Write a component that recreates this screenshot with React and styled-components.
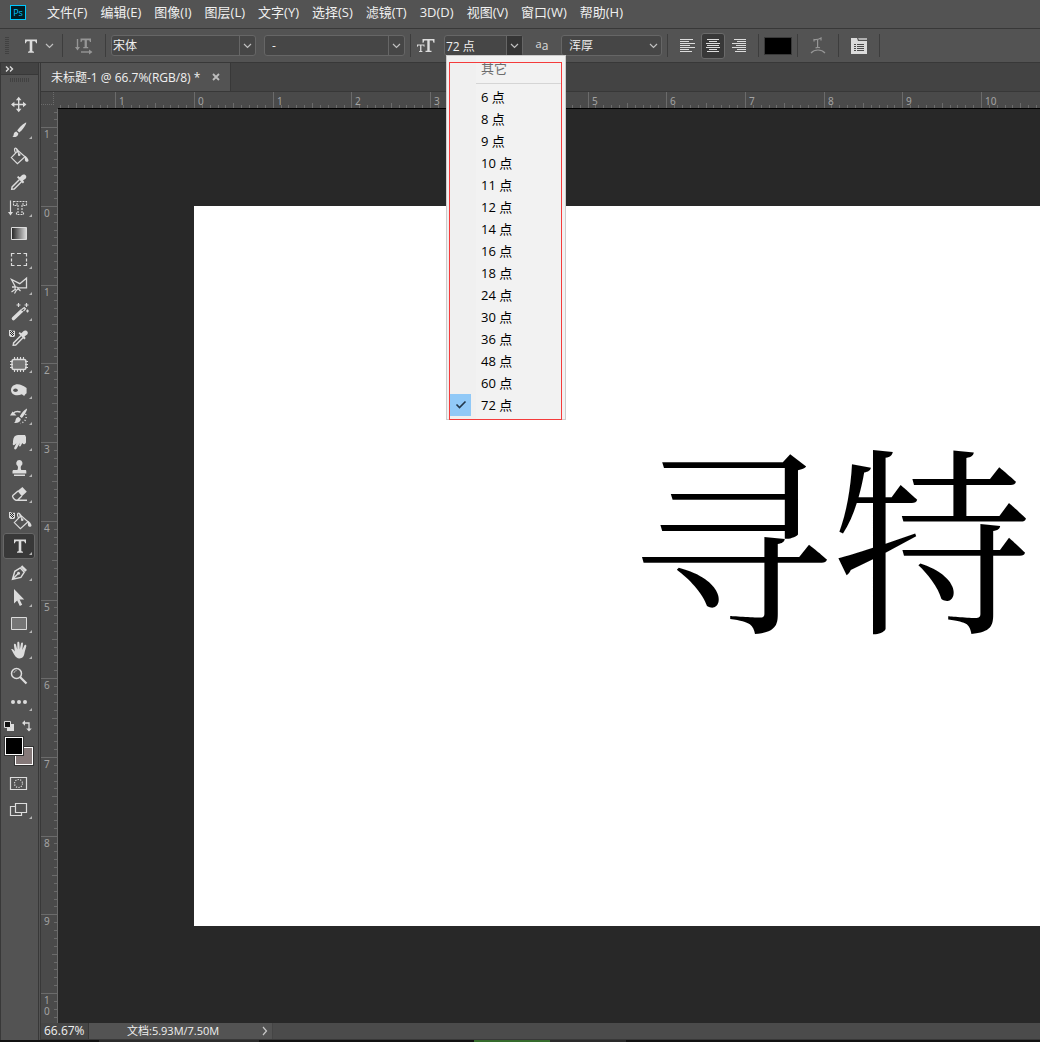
import { useState } from "react";
import styled, { createGlobalStyle } from "styled-components";

const panel = "#535353";
const panelDark = "#434343";
const rulerGray = "#4a4a4a";
const fieldBackground = "#464646";
const line = "#383838";
const iconGray = "#dcdcdc";
const dimGray = "#969696";
const lightText = "#f0f0f0";
const canvasGray = "#282828";

const GlobalStyle = createGlobalStyle`
  * {
    box-sizing: border-box;
  }

  body {
    margin: 0;
    background-color: ${panel};
    color: ${lightText};
    font-family: "Open Sans", "Noto Sans CJK SC", sans-serif;
    font-size: 13px;
  }

  button, input, select {
    font: inherit;
    color: inherit;
    margin: 0;
    padding: 0;
    border: none;
    background: none;
    outline: none;
  }
`;

const Window = styled.div`
  display: flex;
  flex-direction: column;
  height: 100vh;
  overflow: hidden;
`;

/* ---------- menu bar ---------- */

const MenuBar = styled.nav`
  display: flex;
  align-items: center;
  flex: none;
  gap: 13px;
  height: 29px;
  padding: 0 10px 4px;
  border-bottom: 1px solid ${line};
`;

const Logo = styled.div`
  width: 16px;
  height: 15px;
  margin-right: 8px;
  border: 1px solid #00c8ff;
  background-color: #001d26;
  color: #00c8ff;
  font-size: 9px;
  line-height: 13px;
  text-align: center;
`;

const MenuButton = styled.button`
  line-height: 20px;
  white-space: nowrap;
`;

/* ---------- options bar ---------- */

const OptionsBar = styled.div`
  display: flex;
  align-items: center;
  flex: none;
  height: 34px;
  padding-left: 5px;
  border-bottom: 1px solid ${line};
`;

const Grip = styled.div`
  width: ${(props) => (props.$across ? "20px" : "4px")};
  height: ${(props) => (props.$across ? "4px" : "18px")};
  background: repeating-linear-gradient(
    ${(props) => (props.$across ? "90deg" : "180deg")},
    #414141 0 1px,
    transparent 1px 2px
  );
`;

const Separator = styled.div`
  width: 1px;
  height: 23px;
  margin: 0 5px;
  background-color: #3d3d3d;
`;

const OptionButton = styled.button`
  display: flex;
  align-items: center;
  justify-content: center;
  width: ${(props) => props.$width || 30}px;
  height: 26px;
`;

const PresetButton = styled(OptionButton)`
  padding-left: 4px;
`;

const OptionLabel = styled.label`
  display: flex;
  align-items: center;
  justify-content: ${(props) => (props.$start ? "flex-start" : "center")};
  width: ${(props) => props.$width}px;
`;

const SmallA = styled.span`
  padding-bottom: ${(props) => (props.$raised ? "4px" : "0")};
  color: ${iconGray};
  font-size: ${(props) => (props.$raised ? "11px" : "12px")};
  line-height: 14px;
`;

const Field = styled.div`
  position: relative;
  display: flex;
  width: ${(props) => props.$width}px;
  height: 21px;
  margin-right: ${(props) => props.$after || 0}px;
  border: 1px solid #666;
  border-radius: 3px;
  background-color: ${fieldBackground};
`;

const Select = styled.select`
  flex: 1;
  min-width: 0;
  padding-left: ${(props) => props.$indent || 1}px;
  appearance: none;
  font-size: 12px;
`;

const SizeInput = styled.input`
  flex: 1;
  min-width: 0;
  padding-left: 1px;
  font-size: 12px;
`;

const Arrow = styled.span`
  display: flex;
  align-items: center;
  justify-content: center;
  width: 16px;
  border-left: ${(props) => (props.$plain ? "none" : "1px solid #666")};
  pointer-events: none;
`;

const ArrowButton = styled.button`
  display: flex;
  align-items: center;
  justify-content: center;
  width: 16px;
  border-left: 1px solid #666;
  background-color: #353535;
`;

const AlignGroup = styled.div`
  display: flex;
  gap: 2px;
  padding: 0 2px;
`;

const AlignButton = styled.button`
  display: flex;
  align-items: center;
  justify-content: center;
  width: 24px;
  height: 26px;
  border: 1px solid ${(props) => (props.$active ? "#6a6a6a" : "transparent")};
  border-radius: 3px;
  background-color: ${(props) => (props.$active ? "#383838" : "transparent")};
`;

const ColorButton = styled.button`
  width: 28px;
  height: 18px;
  border: 1px solid #393939;
  background-color: #000;
`;

/* ---------- size menu ---------- */

const SizeMenu = styled.div`
  position: absolute;
  z-index: 5;
  top: 19px;
  left: 1px;
  width: 120px;
  padding: 1px 3px 3px;
  border: 1px solid #ccc;
  background: linear-gradient(90deg, #f0f0f0 29px, #f2f2f2 29px);
  color: #000;

  &::after {
    content: "";
    position: absolute;
    inset: 6px 3px -1px 2px;
    border: 1px solid #f43b3b;
    pointer-events: none;
  }
`;

const SizeOption = styled.button`
  display: flex;
  align-items: center;
  gap: 10px;
  width: 100%;
  height: 22px;
  color: ${(props) => (props.disabled ? "#6d6d6d" : "#000")};
  line-height: 20px;
  text-align: left;
`;

const CheckBox = styled.span`
  display: flex;
  align-items: center;
  justify-content: center;
  width: 21px;
  height: 22px;
  background-color: ${(props) => (props.$checked ? "#91c9f7" : "transparent")};
`;

const MenuRule = styled.hr`
  height: 1px;
  margin: 4px 0 2px 26px;
  border: none;
  background-color: #d5d5d5;
`;

/* ---------- toolbar ---------- */

const Main = styled.div`
  display: flex;
  flex: 1;
  min-height: 0;
`;

const Toolbar = styled.aside`
  display: flex;
  flex-direction: column;
  flex: none;
  width: 39px;
  margin-right: 1px;
  border: solid ${line};
  border-width: 0 1px;
`;

const ToolbarHeader = styled.button`
  display: flex;
  align-items: center;
  height: 12px;
  padding-left: 4px;
  border-bottom: 1px solid ${line};
  background-color: ${panelDark};
`;

const ToolbarGrip = styled.div`
  padding: 3px 9px 9px;
`;

const ToolButton = styled.button`
  display: flex;
  align-items: center;
  justify-content: center;
  width: 32px;
  height: 26px;
  margin-left: 2px;
  border-radius: 3px;
  background-color: ${(props) => (props.$active ? "#383838" : "transparent")};
  box-shadow: ${(props) => (props.$active ? "inset 0 0 0 1px #676767" : "none")};
`;

const MiniButtons = styled.div`
  display: flex;
  gap: 6px;
  padding: 5px 3px 4px;
`;

const MiniButton = styled.button`
  display: flex;
`;

const Swatches = styled.div`
  display: grid;
  grid-template-columns: 10px 10px 10px;
  grid-template-rows: 10px 10px 10px;
  margin: 0 3px 5px;
`;

const Swatch = styled.button`
  grid-area: ${(props) => props.$area};
  z-index: ${(props) => (props.$front ? 1 : 0)};
  border: 1px solid #333;
  box-shadow: inset 0 0 0 1px #fff;
  background-color: ${(props) => props.$color};
`;

/* ---------- document ---------- */

const Document = styled.section`
  display: flex;
  flex-direction: column;
  flex: 1;
  min-width: 0;
  border-left: 1px solid ${line};
`;

const Tabs = styled.div`
  display: flex;
  flex: none;
  height: 29px;
  border-bottom: 1px solid ${line};
  background-color: ${panelDark};
`;

const Tab = styled.div`
  display: flex;
  align-items: center;
  gap: 12px;
  padding: 0 10px;
  border-right: 1px solid ${line};
  background-color: ${panel};
  font-size: 12px;
  white-space: nowrap;
`;

const CloseButton = styled.button`
  display: flex;
`;

const Workspace = styled.div`
  display: grid;
  grid-template-columns: 17px minmax(0, 1fr);
  grid-template-rows: 17px minmax(0, 1fr);
  flex: 1;
  min-height: 0;
  background-color: ${rulerGray};
`;

const RulerCorner = styled.div`
  position: relative;

  &::before {
    content: "";
    position: absolute;
    inset: 0 4px 4px 0;
    border: dotted #6b6b6b;
    border-width: 0 1px 1px 0;
  }
`;

const TopRuler = styled.svg`
  width: 100%;
  height: 17px;
  border-bottom: 1px solid #000;
`;

const SideRuler = styled.svg`
  width: 17px;
  height: 100%;
  border-right: 1px solid #6b6b6b;
`;

const RulerText = styled.text`
  fill: #a3a3a3;
  font-family: "Noto Sans", sans-serif;
  font-size: 10px;
`;

const Canvas = styled.div`
  padding: 97px 0 97px 136px;
  overflow: hidden;
  background-color: ${canvasGray};
`;

const Page = styled.div`
  height: 100%;
  padding: 226px 0 0 438px;
  overflow: hidden;
  background-color: #fff;
`;

const PageText = styled.div`
  color: #000;
  font-family: SimSun, "Noto Serif CJK SC", "Noto Sans CJK SC", serif;
  font-size: 200px;
  line-height: 200px;
  white-space: nowrap;
`;

const StatusBar = styled.footer`
  display: flex;
  flex: none;
  height: 17px;
  border-bottom: 1px solid ${line};
  background-color: #4b4b4b;
  font-size: 11px;
  line-height: 16px;
`;

const ZoomInput = styled.input`
  width: 48px;
  padding-left: 3px;
  border-right: 1px solid ${line};
  background-color: #464646;
  font-size: 12px;
`;

const DocumentInfo = styled.button`
  display: flex;
  align-items: center;
  justify-content: space-between;
  width: 184px;
  padding: 0 4px 0 38px;
  border-right: 1px solid #454545;
  background-color: ${panel};
`;

const TaskStrip = styled.div`
  display: grid;
  grid-template-columns: 99px 160px 215px 76px 76px 1fr;
  flex: none;
  height: 2px;
  background-color: #111;
`;

const TaskItem = styled.div`
  grid-column: ${(props) => props.$column};
  background-color: ${(props) => props.$color};
`;

/* ---------- icons ---------- */

const Icon = styled.svg`
  display: block;
  flex: none;
  fill: none;
  stroke: ${(props) => props.$color || iconGray};
  stroke-width: ${(props) => props.$weight || 1.4};
`;

function Chevron() {
  return (
    <Icon width="9" height="6" viewBox="0 0 9 6" $color="#c0c0c0" $weight={1.2}>
      <path d="M1 1l3.5 3.5L8 1" />
    </Icon>
  );
}

const solid = { fill: iconGray, stroke: "none" };

const checker = (
  <g {...solid}>
    <path d="M3 5h1.5l1 .8H9V11l-1.2 1H4.5L3 10.5z" />
    <path
      fill="#2c2c2c"
      d="M4 6h1v1H4zM6 6h1v1H6zM5 7h1v1H5zM7 7h1v1H7zM4 8h1v1H4zM6 8h1v1H6zM5 9h1v1H5zM7 9h1v1H7zM6 10h1v1H6z"
    />
  </g>
);

const dropper = (
  <>
    <path d="M13.5 10.5l-7.4 7.4-.4 2.4 2.5-.3 7.5-7.5" />
    <path
      {...solid}
      d="M11 8.3l1.3-1.2 1.3 1.1c1.5-.8 2.4-2.8 4.1-2.8 2.5 0 3.5 2.7 1.7 4.3L17 11.6l1.2 1.4-1.3 1.4z"
    />
  </>
);

const bucket = (
  <>
    <path
      strokeWidth="1.2"
      d="M5.3 14.6L12 7.5l7 6.3-7.6 6.8zM12 7.5C9.8 3.5 7.3 5 9.3 9.5M10.3 6.3l2.8 5"
    />
    <circle {...solid} cx="13.2" cy="11.7" r="1.3" />
    <path {...solid} d="M18.5 12.5c2 1 4 3.4 4 5s-3 1.8-3.5 0z" />
  </>
);

const letterT = (
  <path
    {...solid}
    d="M8 6.5h12v3.7h-1c-.2-1.4-.7-2-1.8-2h-1.9v9.3c0 .8.5 1.1 1.7 1.2v1h-6v-1c1.2-.1 1.7-.4 1.7-1.2V8.2h-1.9c-1.1 0-1.6.6-1.8 2H8z"
  />
);

const tools = [
  {
    name: "移动工具",
    plain: true,
    art: (
      <>
        <path d="M6 13.5h13.4M12.7 7v13" />
        <path
          {...solid}
          d="M12.7 5.8l2.8 3.4H9.9zM12.7 21.2l2.8-3.4H9.9zM5 13.5l3.4-2.8v5.6zM20.4 13.5L17 10.7v5.6z"
        />
      </>
    ),
  },
  {
    name: "画笔工具",
    art: (
      <path
        {...solid}
        d="M20.2 5.5c.6.5-1.8 5-4.6 8L13.2 15.6 11.2 13.6c1.5-2.8 7.4-8 9-8.1zM10.4 14.4l2 2c-.1 2.7-2.6 4-6 3.6 1.4-1 1.1-2 1.5-3.4.4-1.3 1.4-2.1 2.5-2.2z"
      />
    ),
  },
  { name: "油漆桶工具", plain: true, art: bucket },
  { name: "吸管工具", plain: true, art: dropper },
  {
    name: "直排文字蒙版工具",
    art: (
      <>
        <path strokeWidth="1.2" d="M4.5 5.5v12" />
        <path {...solid} d="M2 17h5l-2.5 3.5z" />
        <path
          strokeDasharray="2 1"
          strokeWidth="1.1"
          d="M7.5 6.5h13v4H18V9h-2v9h1.5v1.5h-7V18H12V9h-2v1.5H7.5z"
        />
      </>
    ),
  },
  {
    name: "渐变工具",
    plain: true,
    art: (
      <>
        <linearGradient id="toolGradient">
          <stop offset="0" stopColor="#222" />
          <stop offset="1" stopColor="#ddd" />
        </linearGradient>
        <path fill="url(#toolGradient)" strokeWidth="1" d="M5.5 6.5h15v12h-15z" />
      </>
    ),
  },
  {
    name: "矩形选框工具",
    art: (
      <path
        strokeWidth="1.2"
        d="M5.5 9.5v-3h3M11 6.5h4M17.5 6.5h3v3M20.5 11.5v3M20.5 16v2.5h-3M15 18.5h-4M8.5 18.5h-3V16M5.5 14.5v-3"
      />
    ),
  },
  {
    name: "多边形套索工具",
    art: (
      <>
        <path strokeWidth="1.3" d="M9.5 14L5.5 6.5l8.3 4.2 6.7-5.5v9.6H12M9.5 14H6" />
        <circle cx="10.5" cy="15.5" r="1.5" strokeWidth="1.2" />
        <path strokeWidth="1.2" d="M9 16.5L5.5 19M10.5 17l-2 3.5M12 15.5l2.5 2.5" />
      </>
    ),
  },
  {
    name: "魔棒工具",
    art: (
      <>
        <path strokeWidth="3.6" strokeLinecap="round" d="M7.5 19.5l8.2-7.7" />
        <path d="M15.8 11.7l2-1.9" stroke="#535353" strokeWidth="1.6" />
        <path strokeWidth="1.2" strokeLinecap="round" d="M16 10.3l2.3-1.8 1.2 1.2-1.5 2" />
        <path strokeWidth="1.2" d="M12.5 4v4M10.5 6h4M20.5 4v4M18.5 6h4M21.5 10.5v3M20 12h3" />
      </>
    ),
  },
  {
    name: "背景取样工具",
    plain: true,
    art: (
      <>
        {checker}
        <g transform="translate(1.5 0)">{dropper}</g>
      </>
    ),
  },
  {
    name: "修补工具",
    art: (
      <>
        <rect x="6" y="8.5" width="14" height="10" rx="2" fill="#757575" />
        <path
          strokeWidth="1.1"
          d="M8.5 6v3M11.5 6v3M14.5 6v3M17.5 6v3M8.5 18v3M11.5 18v3M14.5 18v3M17.5 18v3M4 10.5h3M4 13.5h3M4 16.5h3M19 10.5h3M19 13.5h3M19 16.5h3"
        />
      </>
    ),
  },
  {
    name: "海绵工具",
    art: (
      <>
        <path
          {...solid}
          d="M5 13c0-3.6 3-5.8 6.6-5.8 3 0 5 1.2 9 3.8v5.2c-.8.9-1.6 1-2.4 2.8l-2.4-1.8c-5 2.5-10.8.5-10.8-4.2z"
        />
        <ellipse cx="9.5" cy="13.3" rx="2.3" ry="1.8" fill="#555" stroke="none" />
      </>
    ),
  },
  {
    name: "历史记录画笔工具",
    art: (
      <>
        <path
          {...solid}
          d="M21 5.5c.3 1.8-2 6-5.2 9.5l-2-1.5c1.5-3.5 5-7 7.2-8zM12.5 14l2.3 2c-.3 3-3 4.4-6.8 4 1.5-.9 1.2-2 1.7-3.5.4-1.5 1.5-2.5 2.8-2.5zM4 12.5l2.6-4 3.9 4z"
        />
        <path strokeWidth="1.3" d="M7.5 10C9 8.5 12 8.3 14.5 9" />
        <path strokeDasharray="1.2 1.8" d="M19.5 11c2 4-.5 8-5 9.5" />
      </>
    ),
  },
  {
    name: "涂抹工具",
    art: (
      <path
        {...solid}
        d="M7 12c.3-4 2-6 5-6h7l1 2v5.5c-1 2.4-2.6 2-3.7.5l-1.6 3c-.8.9-1.7.7-1.7-.5l1-2.8-3.5 6c-1.2 1.4-2.6.5-2.3-.9l2.2-4.6-2 1.8c-1.2.6-2.2-.6-1.4-1.9z"
      />
    ),
  },
  {
    name: "仿制图章工具",
    art: (
      <path
        {...solid}
        d="M13.3 5a3.2 3.2 0 0 1 2 5.7c-.8.7-.7 2.6 0 4.3h4c.8 0 1 .6 1 1.4v2H6.5v-2c0-.8.4-1.4 1.2-1.4h3.7c.8-1.7.8-3.6 0-4.3A3.2 3.2 0 0 1 13.3 5zM8 19.6h11v1.3H8z"
      />
    ),
  },
  {
    name: "橡皮擦工具",
    art: (
      <>
        <path {...solid} d="M11.5 10l4.9-4 4.4 4.7-4.9 4.6z" />
        <path d="M12 10l-5.2 4.5c-.8.7.8 4.3 3.2 4.7h1.5L15.8 15M10 19.3h11" />
      </>
    ),
  },
  {
    name: "背景油漆桶工具",
    plain: true,
    art: (
      <>
        {checker}
        <g transform="translate(3 1)">{bucket}</g>
      </>
    ),
  },
  { name: "横排文字工具", active: true, art: letterT },
  {
    name: "钢笔工具",
    art: (
      <>
        <path d="M6.5 20.2L8.8 12.3 14.3 9l4 4.2-3.4 5.2zM6.5 20.2l5.2-5.2" />
        <circle {...solid} cx="12.5" cy="14.3" r="1.5" />
        <path {...solid} d="M14.5 8l1.7-1.8L21 11l-1.8 1.8z" />
      </>
    ),
  },
  {
    name: "路径选择工具",
    art: <path {...solid} d="M8 4v14.5l3.2-3 2.6 5.5 2.4-1.2-2.6-5.3h4.6z" />,
  },
  {
    name: "矩形工具",
    art: <path fill="#757575" strokeWidth="1" d="M5.5 6.5h15v12h-15z" />,
  },
  {
    name: "抓手工具",
    art: (
      <path
        {...solid}
        d="M5.2 12.3c.8-.7 1.8-.2 2.5.8l1.1 1.4L7.9 8c-.1-1.5 1.5-1.9 2-.5l1.4 5V6c0-1.7 2-1.7 2.1 0l.4 6.4 1.2-6c.3-1.6 2.2-1.2 2 .4l-.7 6.2 2-4.5c.7-1.3 2.4-.6 2 .8L18.7 15c-.7 4.5-2 6.4-5.3 6.4-4.3 0-5.2-4.4-8.2-9.1z"
      />
    ),
  },
  {
    name: "缩放工具",
    plain: true,
    art: (
      <>
        <circle cx="10.5" cy="10.5" r="5" strokeWidth="1.5" />
        <path strokeWidth="1" stroke="#b5b5b5" d="M8 10c.2-1.5 1.2-2.3 2.7-2.4" />
        <path strokeWidth="2.2" d="M14 14l6.5 6.5" />
      </>
    ),
  },
  {
    name: "编辑工具栏",
    art: (
      <g {...solid}>
        <circle cx="7" cy="13" r="2" />
        <circle cx="13" cy="13" r="2" />
        <circle cx="19" cy="13" r="2" />
      </g>
    ),
  },
];

const viewTools = [
  {
    name: "快速蒙版",
    plain: true,
    art: (
      <>
        <path strokeWidth="1.2" d="M4.5 6.5h16v12h-16z" />
        <circle cx="12.5" cy="12.5" r="4" strokeWidth="1.2" strokeDasharray="1.2 1.3" />
      </>
    ),
  },
  {
    name: "屏幕模式",
    art: <path strokeWidth="1.2" d="M9.5 6.5h11v9h-11zM9.5 9.5h-5v9h11v-3" />,
  },
];

const alignments = [
  { name: "左对齐文本", d: "M0 .5h13M0 2.5h9M0 4.5h15M0 6.5h10M0 8.5h15M0 10.5h9M0 12.5h12" },
  {
    name: "居中对齐文本",
    active: true,
    d: "M1 .5h12M3 2.5h8M0 4.5h14M1 6.5h12M0 8.5h14M3 10.5h8M1 12.5h12",
  },
  { name: "右对齐文本", d: "M2 .5h12M5 2.5h9M0 4.5h14M4 6.5h10M0 8.5h14M5 10.5h9M3 12.5h11" },
];

function Tool({ tool }) {
  return (
    <ToolButton aria-label={tool.name} $active={tool.active}>
      <Icon width="26" height="26" viewBox="0 0 26 26">
        {tool.art}
        {!tool.plain && <path fill="#b5b5b5" stroke="none" d="M26 19v3h-3z" />}
      </Icon>
    </ToolButton>
  );
}

/* ---------- rulers ---------- */

// screen pixels for one ruler unit at 66.7%
const unit = 78.7;

function ticks(origin, length) {
  const list = [];
  const first = -Math.floor((origin / unit) * 10);
  for (let i = first; origin + (i * unit) / 10 < length; i++) {
    list.push({ i, at: Math.round(origin + (i * unit) / 10) });
  }
  return list;
}

function tickLength(i) {
  if (i % 10 === 0) return 16;
  return i % 5 === 0 ? 5 : 3;
}

function HorizontalRuler() {
  const length = window.innerWidth - 58;

  return (
    <TopRuler aria-hidden="true">
      {ticks(136, length).map(({ i, at }) => (
        <g key={i}>
          <rect x={at} y={16 - tickLength(i)} width="1" height={tickLength(i)} fill="#6b6b6b" />
          {i % 10 === 0 && at + 20 < length && (
            <RulerText x={at + 4} y="13">
              {Math.abs(i / 10)}
            </RulerText>
          )}
        </g>
      ))}
    </TopRuler>
  );
}

function VerticalRuler() {
  const length = window.innerHeight - 128;

  return (
    <SideRuler aria-hidden="true">
      {ticks(97, length).map(({ i, at }) => (
        <g key={i}>
          <rect x={16 - tickLength(i)} y={at} width={tickLength(i)} height="1" fill="#6b6b6b" />
          {i % 10 === 0 &&
            at + 24 < length &&
            String(Math.abs(i / 10))
              .split("")
              .map((digit, row) => (
                <RulerText key={row} x="3" y={at + 11 + row * 11}>
                  {digit}
                </RulerText>
              ))}
        </g>
      ))}
    </SideRuler>
  );
}

const menus = [
  "文件(F)",
  "编辑(E)",
  "图像(I)",
  "图层(L)",
  "文字(Y)",
  "选择(S)",
  "滤镜(T)",
  "3D(D)",
  "视图(V)",
  "窗口(W)",
  "帮助(H)",
];

const sizes = [6, 8, 9, 10, 11, 12, 14, 16, 18, 24, 30, 36, 48, 60, 72];

function SizeField() {
  const [size, setSize] = useState("72 点");
  const [open, setOpen] = useState(true);

  return (
    <Field $width={79}>
      <SizeInput id="font-size" value={size} onChange={(e) => setSize(e.target.value)} />
      <ArrowButton aria-label="字体大小列表" aria-expanded={open} onClick={() => setOpen(!open)}>
        <Chevron />
      </ArrowButton>
      {open && (
        <SizeMenu role="menu">
          <SizeOption role="menuitem" disabled>
            <CheckBox />
            其它
          </SizeOption>
          <MenuRule />
          {sizes.map((value) => {
            const label = `${value} 点`;
            const checked = label === size;
            return (
              <SizeOption
                key={value}
                role="menuitemradio"
                aria-checked={checked}
                onClick={() => setSize(label)}
              >
                <CheckBox $checked={checked}>
                  {checked && (
                    <Icon width="12" height="10" viewBox="0 0 12 10" $color="#23374a" $weight={1.6}>
                      <path d="M1.5 4.5l3 3 6-6" />
                    </Icon>
                  )}
                </CheckBox>
                {label}
              </SizeOption>
            );
          })}
        </SizeMenu>
      )}
    </Field>
  );
}

function Options() {
  return (
    <OptionsBar>
      <Grip />
      <PresetButton $width={48} aria-label="文字工具预设">
        <Icon width="28" height="26" viewBox="0 0 28 26">
          {letterT}
        </Icon>
        <Chevron />
      </PresetButton>
      <Separator />
      <OptionButton $width={32} aria-label="切换文本取向">
        <Icon width="18" height="18" viewBox="0 0 18 18" $color={dimGray}>
          <path d="M2.5 2v9" />
          <path
            fill={dimGray}
            stroke="none"
            d="M0 10h5l-2.5 3.5zM14 12.5l3.5 2.5-3.5 2.5zM5.5 1.5H16V5h-1l-.8-1.8h-2.3V10h1.3v1.2H8.3V10h1.3V3.2H7.3L6.5 5h-1z"
          />
          <path d="M6 15h8.5" />
        </Icon>
      </OptionButton>
      <Separator />
      <Field $width={145} $after={8}>
        <Select aria-label="字体">
          <option>宋体</option>
        </Select>
        <Arrow>
          <Chevron />
        </Arrow>
      </Field>
      <Field $width={141}>
        <Select aria-label="字体样式" $indent={7}>
          <option>-</option>
        </Select>
        <Arrow>
          <Chevron />
        </Arrow>
      </Field>
      <Separator />
      <OptionLabel $width={28} $start htmlFor="font-size" aria-label="字体大小">
        <Icon width="20" height="16" viewBox="0 0 20 16">
          <path
            {...solid}
            d="M6.5 1h12v3.7h-1l-.8-2.1h-3v10.1h1.8V14h-6v-1.3h1.8V2.6h-3l-.8 2.1h-1zM1 6.5h7.5v2.3h-.7l-.5-1.2H5.4v5.3h1V14H3.1v-1.1h1V7.6H2.2l-.5 1.2H1z"
          />
        </Icon>
      </OptionLabel>
      <SizeField />
      <OptionLabel $width={38} htmlFor="antialias">
        <SmallA $raised>a</SmallA>
        <SmallA>a</SmallA>
      </OptionLabel>
      <Field $width={101}>
        <Select id="antialias" aria-label="消除锯齿" $indent={7}>
          <option>浑厚</option>
        </Select>
        <Arrow $plain>
          <Chevron />
        </Arrow>
      </Field>
      <Separator />
      <AlignGroup>
        {alignments.map((item) => (
          <AlignButton key={item.name} aria-label={item.name} $active={item.active}>
            <Icon width="15" height="13" viewBox="0 0 15 13" $weight={1}>
              <path d={item.d} />
            </Icon>
          </AlignButton>
        ))}
      </AlignGroup>
      <Separator />
      <ColorButton aria-label="文本颜色" />
      <Separator />
      <OptionButton aria-label="创建文字变形">
        <Icon width="16" height="17" viewBox="0 0 16 17" $color={dimGray} $weight={1.2}>
          <path d="M4 4.5v-2c3 .5 4.5 0 7-1.5v2.5M7.6 2.5v8M5.5 11c1.5-.7 3-.7 4.5-.2M1 16c3.5-4 10.5-4 14 0" />
        </Icon>
      </OptionButton>
      <Separator />
      <OptionButton aria-label="字符和段落面板">
        <Icon width="16" height="16" viewBox="0 0 16 16">
          <path {...solid} d="M0 0h6l1 3h9v13H0z" />
          <path fill="#b0b0b0" stroke="none" d="M7 0h9v2H8z" />
          <path
            stroke="#4a4a4a"
            strokeWidth="1"
            d="M3 6.5h2M6 6.5h7M3 8.5h2M6 8.5h7M3 10.5h2M6 10.5h7M3 12.5h2M6 12.5h7"
          />
        </Icon>
      </OptionButton>
      <Separator />
    </OptionsBar>
  );
}

function App() {
  return (
    <Window>
      <GlobalStyle />
      <MenuBar>
        <Logo>Ps</Logo>
        {menus.map((label) => (
          <MenuButton key={label}>{label}</MenuButton>
        ))}
      </MenuBar>

      <Options />

      <Main>
        <Toolbar>
          <ToolbarHeader aria-label="展开面板">
            <Icon width="9" height="6" viewBox="0 0 9 6" $weight={1.4}>
              <path d="M1 .5L3.5 3 1 5.5M5 .5L7.5 3 5 5.5" />
            </Icon>
          </ToolbarHeader>
          <ToolbarGrip>
            <Grip $across />
          </ToolbarGrip>
          {tools.map((tool) => (
            <Tool key={tool.name} tool={tool} />
          ))}
          <MiniButtons>
            <MiniButton aria-label="默认前景色和背景色">
              <Icon width="11" height="12" viewBox="0 0 11 12" $weight={1}>
                <path {...solid} d="M3 4h7v7H3z" />
                <path fill="#111" d="M.5 1.5h6v6h-6z" />
              </Icon>
            </MiniButton>
            <MiniButton aria-label="切换前景色和背景色">
              <Icon width="12" height="12" viewBox="0 0 12 12" $weight={1.3}>
                <path d="M3 3h5v6" />
                <path {...solid} d="M1 3L4 .2v5.6zM8 11.5l-2.8-3h5.6z" />
              </Icon>
            </MiniButton>
          </MiniButtons>
          <Swatches>
            <Swatch aria-label="前景色" $area="1 / 1 / 3 / 3" $color="#000" $front />
            <Swatch aria-label="背景色" $area="2 / 2 / 4 / 4" $color="#857979" />
          </Swatches>
          {viewTools.map((tool) => (
            <Tool key={tool.name} tool={tool} />
          ))}
        </Toolbar>

        <Document>
          <Tabs>
            <Tab>
              未标题-1 @ 66.7%(RGB/8) *
              <CloseButton aria-label="关闭">
                <Icon width="8" height="8" viewBox="0 0 8 8" $color="#bdbdbd" $weight={1.8}>
                  <path d="M1 1l6 6M7 1L1 7" />
                </Icon>
              </CloseButton>
            </Tab>
          </Tabs>
          <Workspace>
            <RulerCorner />
            <HorizontalRuler />
            <VerticalRuler />
            <Canvas>
              <Page>
                <PageText>寻特</PageText>
              </Page>
            </Canvas>
          </Workspace>
          <StatusBar>
            <ZoomInput aria-label="缩放比例" defaultValue="66.67%" />
            <DocumentInfo>
              文档:5.93M/7.50M
              <Icon width="6" height="10" viewBox="0 0 6 10" $color="#c8c8c8" $weight={1.2}>
                <path d="M1 1l3.5 4L1 9" />
              </Icon>
            </DocumentInfo>
          </StatusBar>
        </Document>
      </Main>

      <TaskStrip>
        <TaskItem $column="2" $color="#2c2c2c" />
        <TaskItem $column="4" $color="#356b2c" />
        <TaskItem $column="5" $color="#2a2a2a" />
      </TaskStrip>
    </Window>
  );
}

export default App;
